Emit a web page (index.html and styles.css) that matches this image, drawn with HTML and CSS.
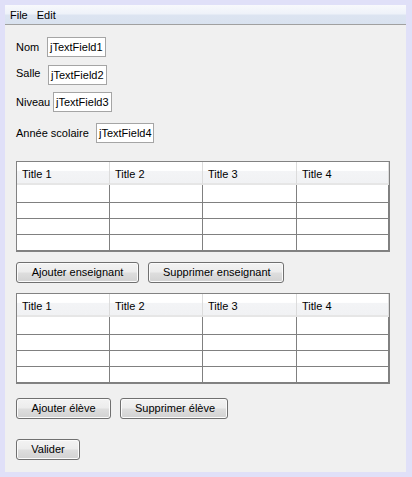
FILE: index.html
```html
<!DOCTYPE html>
<html>
<head>
<meta charset="utf-8">
<link rel="stylesheet" href="styles.css">
</head>
<body>
<div class="frame">
  <div class="window">
    <div class="menubar">
      <span class="menu">File</span>
      <span class="menu">Edit</span>
    </div>
    <div class="content">
      <div class="fields">
        <div class="frow row-nom"><span class="lbl">Nom</span><span class="tf">jTextField1</span></div>
        <div class="frow row-salle"><span class="lbl">Salle</span><span class="tf">jTextField2</span></div>
        <div class="frow row-niveau"><span class="lbl">Niveau</span><span class="tf">jTextField3</span></div>
        <div class="frow row-annee"><span class="lbl">Année scolaire</span><span class="tf">jTextField4</span></div>
      </div>

      <div class="tbl tbl-first">
        <div class="th">Title 1</div><div class="th">Title 2</div><div class="th">Title 3</div><div class="th">Title 4</div>
        <div class="td"></div><div class="td"></div><div class="td"></div><div class="td"></div>
        <div class="td"></div><div class="td"></div><div class="td"></div><div class="td"></div>
        <div class="td"></div><div class="td"></div><div class="td"></div><div class="td"></div>
        <div class="td"></div><div class="td"></div><div class="td"></div><div class="td"></div>
      </div>

      <div class="btns btns-ens">
        <button class="btn">Ajouter enseignant</button>
        <button class="btn">Supprimer enseignant</button>
      </div>

      <div class="tbl tbl-second">
        <div class="th">Title 1</div><div class="th">Title 2</div><div class="th">Title 3</div><div class="th">Title 4</div>
        <div class="td"></div><div class="td"></div><div class="td"></div><div class="td"></div>
        <div class="td"></div><div class="td"></div><div class="td"></div><div class="td"></div>
        <div class="td"></div><div class="td"></div><div class="td"></div><div class="td"></div>
        <div class="td"></div><div class="td"></div><div class="td"></div><div class="td"></div>
      </div>

      <div class="btns btns-eleve">
        <button class="btn">Ajouter élève</button>
        <button class="btn">Supprimer élève</button>
      </div>

      <div class="btns btns-valider">
        <button class="btn">Valider</button>
      </div>
    </div>
  </div>
</div>
</body>
</html>
```

FILE: styles.css
```css
* { box-sizing: border-box; }
html, body {
  margin: 0;
  padding: 0;
  width: 412px;
  height: 477px;
  overflow: hidden;
  background: #e0e0f8;
  font-family: "Liberation Sans", Arial, sans-serif;
  font-size: 11px;
  color: #000;
}
.frame {
  padding: 5px 6px 5px 5px;
  height: 477px;
}
.window {
  width: 401px;
  height: 467px;
  background: #f0f0f0;
  display: flex;
  flex-direction: column;
}
.menubar {
  height: 20px;
  display: flex;
  align-items: center;
  padding: 1px 0 0 0;
  border-bottom: 1px solid #a0a0a0;
  background: linear-gradient(#f8f9fc 0%, #eef2f9 45%, #dce4f1 55%, #d9e2ef 100%);
}
.menu {
  padding: 0 4px 0 5px;
  line-height: 14px;
}
.menu + .menu { padding-left: 5px; }
.content {
  padding: 12px 0 0 11px;
  display: flex;
  flex-direction: column;
  align-items: flex-start;
}
.fields {
  display: flex;
  flex-direction: column;
}
.frow {
  display: flex;
  align-items: center;
  height: 20px;
}
.row-salle { margin-top: 8px; }
.row-niveau { margin-top: 7px; }
.row-annee { margin-top: 11px; }
.lbl { line-height: 13px; }
.row-nom .lbl { width: 31px; }
.row-salle .lbl { width: 32px; margin-bottom: 4px; }
.row-niveau .lbl { width: 37px; }
.row-annee .lbl { width: 80px; margin-top: 1px; }
.tf {
  width: 59px;
  height: 20px;
  background: #fff;
  border: 1px solid #a5a5a5;
  padding: 0 0 0 2px;
  line-height: 18px;
  white-space: nowrap;
  overflow: hidden;
}
.row-annee .tf { width: 58px; }

.tbl {
  width: 374px;
  height: 91px;
  display: grid;
  grid-template-columns: 93px 93px 94px 92px;
  grid-template-rows: 23px 18px 16px 16px 16px;
  border: 1px solid #828282;
  background: #fff;
}
.tbl-first { margin-top: 18px; }
.tbl-second { margin-top: 10px; }
.th {
  background: linear-gradient(#ffffff 0%, #ffffff 40%, #f3f4f6 45%, #f1f2f4 100%);
  border-right: 1px solid #dcdcdc;
  border-bottom: 2px solid #e6e6e6;
  padding: 5px 0 0 5px;
  line-height: 14px;
  white-space: nowrap;
}
.td {
  border-right: 1px solid #808080;
  border-bottom: 1px solid #808080;
  background: #fff;
}

.btns {
  display: flex;
  gap: 9px;
}
.btns-ens { margin-top: 10px; }
.btns-eleve { margin-top: 14px; }
.btns-valider { margin-top: 20px; }
.btn {
  font-family: "Liberation Sans", Arial, sans-serif;
  font-size: 11px;
  color: #000;
  height: 21px;
  padding: 0 14px 1px 14px;
  border: 1px solid #707070;
  border-radius: 3px;
  background: linear-gradient(#f3f3f3 0%, #ececec 48%, #dedede 52%, #d2d2d2 100%);
  box-shadow: inset 0 0 0 1px #fbfbfb;
  white-space: nowrap;
  margin: 0;
}
.btns-ens .btn:first-child { width: 123px; }
.btns-ens .btn:last-child { width: 136px; }
.btns-eleve .btn:first-child { width: 95px; }
.btns-eleve .btn:last-child { width: 108px; }
.btns-valider .btn { width: 64px; }
```
